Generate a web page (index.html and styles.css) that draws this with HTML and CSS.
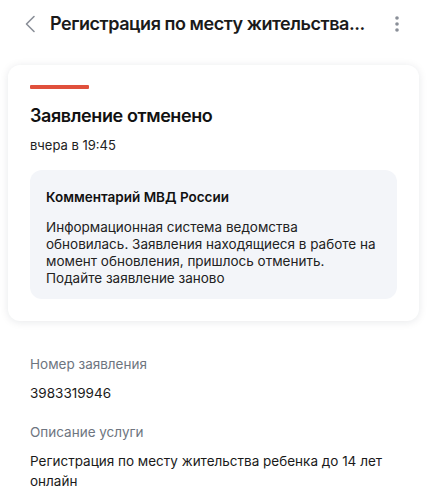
FILE: index.html
```html
<!DOCTYPE html>
<html lang="ru">
<head>
<meta charset="utf-8">
<link rel="stylesheet" href="styles.css">
</head>
<body>
<header class="topbar">
  <svg class="back" width="12" height="18" viewBox="0 0 12 18"><path d="M10 1.5 L2.5 9 L10 16.5" fill="none" stroke="#8a8f98" stroke-width="1.6" stroke-linecap="round" stroke-linejoin="round"/></svg>
  <h1 class="title">Регистрация по месту жительства...</h1>
  <svg class="kebab" width="6" height="20" viewBox="0 0 6 20"><circle cx="3" cy="4" r="1.8" fill="#8a8f98"/><circle cx="3" cy="10" r="1.8" fill="#8a8f98"/><circle cx="3" cy="16" r="1.8" fill="#8a8f98"/></svg>
</header>
<main class="content">
  <section class="card">
    <div class="status-bar"></div>
    <h2 class="status">Заявление отменено</h2>
    <p class="date">вчера в 19:45</p>
    <div class="comment">
      <h3 class="comment-title">Комментарий МВД России</h3>
      <p class="comment-text">Информационная система ведомства обновилась. Заявления находящиеся в работе на момент обновления, пришлось отменить. Подайте заявление заново</p>
    </div>
  </section>
  <dl class="info">
    <dt>Номер заявления</dt>
    <dd>3983319946</dd>
    <dt>Описание услуги</dt>
    <dd>Регистрация по месту жительства ребенка до 14 лет онлайн</dd>
  </dl>
</main>
</body>
</html>
```
FILE: styles.css
```css
* { box-sizing: border-box; }
body {
  margin: 0;
  background: #fff;
  font-family: Inter, "Noto Sans", sans-serif;
  color: #0b1f33;
}
.topbar {
  display: flex;
  align-items: center;
  height: 46px;
  padding: 0 27px 0 24px;
}
.back { flex: none; margin-right: 14px; margin-top: 1px; }
.title {
  flex: 1;
  margin: 0;
  font-size: 18px;
  font-weight: 600;
  color: #1a1a1a;
  white-space: nowrap;
  letter-spacing: -0.45px;
}
.kebab { flex: none; margin-top: 1px; }
.content { padding: 19px 8px 0 8px; }
.card {
  background: #fff;
  border-radius: 12px;
  box-shadow: 0 1px 8px rgba(20, 30, 50, 0.10);
  padding: 20px 22px 22px 22px;
}
.status-bar {
  width: 59px;
  height: 4px;
  background: #e0503c;
  border-radius: 1px;
}
.status {
  margin: 15px 0 0 0;
  font-size: 18px;
  line-height: 24px;
  font-weight: 600;
  color: #111;
  letter-spacing: -0.4px;
}
.date {
  margin: 8px 0 0 0;
  font-size: 13px;
  line-height: 18px;
  color: #222;
}
.comment {
  margin-top: 16px;
  background: #f3f5f9;
  border-radius: 12px;
  padding: 18px 16px 12px 16px;
}
.comment-title {
  margin: 0;
  font-size: 13.5px;
  line-height: 18px;
  font-weight: 600;
  color: #111;
}
.comment-text {
  margin: 13px 0 0 0;
  font-size: 13.5px;
  line-height: 17px;
  color: #222;
}
.info { margin: 34px 0 0 0; padding: 0 22px; }
.info dt {
  font-size: 13.5px;
  line-height: 18px;
  color: #6e7580;
}
.info dd {
  margin: 10px 0 20px 0;
  font-size: 13.5px;
  line-height: 20px;
  color: #1a1a1a;
}
```
